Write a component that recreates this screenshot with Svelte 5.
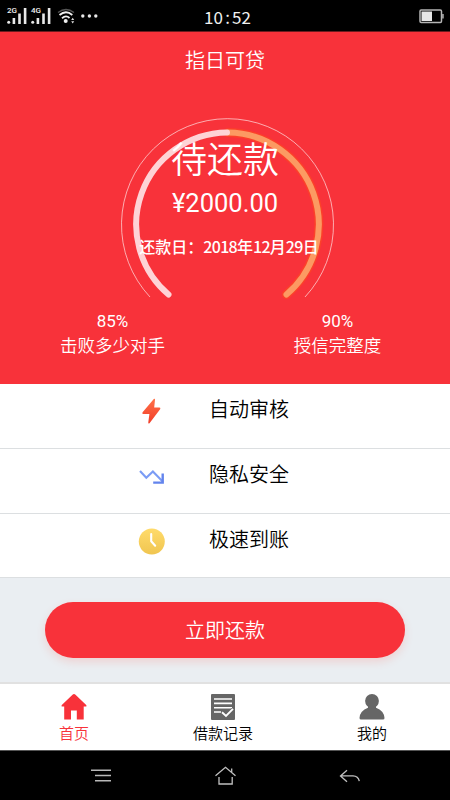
<script>
	let hours = $state('10');
	let minutes = $state('52');
	let activeTab = $state('home');

	const signals = ['2G', '4G'];

	const loan = {
		label: '待还款',
		amount: '¥2000.00'
	};

	const scores = [
		{ value: '85%', label: '击败多少对手' },
		{ value: '90%', label: '授信完整度' }
	];

	const features = [
		{ icon: 'bolt', text: '自动审核' },
		{ icon: 'trend', text: '隐私安全' },
		{ icon: 'clock', text: '极速到账' }
	];

	const tabs = [
		{ id: 'home', text: '首页' },
		{ id: 'records', text: '借款记录' },
		{ id: 'mine', text: '我的' }
	];
</script>

<div class="phone">
	<div class="status-bar">
		<div class="status-left">
			{#each signals as signal}
				<span class="signal">
					<svg width="20" height="16" viewBox="0 0 20 16" fill="#e8e8e8">
						<circle cx="1.7" cy="14.2" r="1.5" />
						<rect x="5.6" y="10" width="2.6" height="6" />
						<rect x="11.2" y="5.5" width="2.6" height="10.5" />
						<rect x="16.8" y="0" width="2.6" height="16" />
					</svg>
					<small>{signal}</small>
				</span>
			{/each}
			<svg class="wifi" width="20" height="16" viewBox="0 0 20 16" fill="none" stroke="#f0f0f0" stroke-width="1.8">
				<path d="M1 4.5Q9 -1.5 17 4.5" stroke="#555" stroke-width="1.3" />
				<path d="M2.5 7Q9 1.5 15.3 7" />
				<path d="M5 10.2Q9 6.7 12.5 10" />
				<circle cx="8.7" cy="13" r="2" fill="#f0f0f0" stroke="none" />
				<path d="M14.2 12l1.5-2.2 1.5 2.2zM14.2 13.2l1.5 2.2 1.5-2.2z" fill="#ddd" stroke="none" />
			</svg>
			<svg width="18" height="4" viewBox="0 0 18 4" fill="#e8e8e8">
				<circle cx="2.8" cy="2" r="1.7" />
				<circle cx="9.4" cy="2" r="1.7" />
				<circle cx="15.8" cy="2" r="1.7" />
			</svg>
		</div>
		<span class="time">{hours}<i>:</i>{minutes}</span>
		<svg class="battery" width="25" height="15" viewBox="0 0 25 15">
			<rect x="1" y="1" width="21.5" height="12.5" rx="1.2" fill="none" stroke="#b5b5b5" stroke-width="1.5" />
			<rect x="2.5" y="2.5" width="10.5" height="9.5" fill="#e6e6e6" />
			<rect x="23.2" y="5" width="1.5" height="4.5" fill="#b5b5b5" />
		</svg>
	</div>

	<section class="hero">
		<h1>指日可贷</h1>
		<div class="gauge">
			<svg class="dial" width="220" height="190" viewBox="0 0 220 190" fill="none">
				<path d="M33 182A106 106 0 1 1 188 182" stroke="#fff" stroke-opacity=".6" stroke-width="1" />
				<path d="M111 17.5A92 92 0 0 1 169.5 179.5" stroke="#ff4a20" stroke-opacity=".6" stroke-width="9" stroke-linecap="round" />
				<path d="M111 17.5A92 92 0 0 1 169.5 179.5" stroke="#fc9a62" stroke-width="6" stroke-linecap="round" />
				<path d="M110 17.5A92 92 0 0 0 51.5 179.5" stroke="#fed3d6" stroke-width="6" stroke-linecap="round" />
			</svg>
			<div class="reading">
				<p class="state">{loan.label}</p>
				<p class="amount">{loan.amount}</p>
				<p class="due">还款日：<span>2018</span>年<span>12</span>月<span>29</span>日</p>
			</div>
		</div>
		<div class="scores">
			{#each scores as score}
				<div class="score">
					<strong>{score.value}</strong>
					<span>{score.label}</span>
				</div>
			{/each}
		</div>
	</section>

	<ul class="features">
		{#each features as feature}
			<li>
				<svg width="28" height="28" viewBox="0 0 28 28">
					{#if feature.icon === 'bolt'}
						<defs>
							<linearGradient id="bolt" x1="0" y1="0" x2="0" y2="1">
								<stop offset="0" stop-color="#ff7048" />
								<stop offset="1" stop-color="#f13d28" />
							</linearGradient>
						</defs>
						<path d="M15.8 2Q17.2 1 17 2.7L16.2 10.6H21.5Q23 10.6 22.1 12.2L11.7 26Q10.1 27.3 10.3 25.3L11.4 17H5.2Q3.6 16.8 4.6 15.2Z" fill="url(#bolt)" />
					{:else if feature.icon === 'trend'}
						<path d="M2 9l6.3 6.8 6.6-6.4 10 10.3" fill="none" stroke="#7b9cf5" stroke-width="2.1" />
						<path d="M24.7 11.5v9.1h-9.5" fill="none" stroke="#6384ed" stroke-width="2.4" />
					{:else}
						<defs>
							<linearGradient id="clock" x1="0" y1="0" x2="0" y2="1">
								<stop offset="0" stop-color="#ffdb6b" />
								<stop offset="1" stop-color="#f0c550" />
							</linearGradient>
						</defs>
						<circle cx="13.8" cy="14.5" r="13" fill="url(#clock)" />
						<path d="M13.2 7v7.2l4 4.5" fill="none" stroke="#fff" stroke-width="2.1" stroke-linecap="round" stroke-linejoin="round" />
					{/if}
				</svg>
				<span>{feature.text}</span>
			</li>
		{/each}
	</ul>

	<div class="action">
		<button type="button">立即还款</button>
	</div>

	<nav class="tabs">
		{#each tabs as tab}
			<button type="button" class:active={activeTab === tab.id} onclick={() => (activeTab = tab.id)}>
				<svg width="28" height="28" viewBox="0 0 28 28" fill="currentColor">
					{#if tab.id === 'home'}
						<path d="M12.5 1.7Q14 .3 15.5 1.7L26.2 12Q27.3 13.5 25.7 13.5H23.7V26.5H16.8V17.5H11V26.5H4.2V13.5H2.3Q.7 13.5 1.8 12Z" />
					{:else if tab.id === 'records'}
						<rect x="2" y="1" width="24" height="26" rx="1" />
						<path d="M5 6h18M5 10.4h18M5 14.8h18M5 19h7" stroke="#fff" stroke-width="1.6" />
						<path d="M13 19.7l4 3.7 7-7" fill="none" stroke="#666" stroke-width="4" />
						<path d="M13 19.2l4 3.7 7-7" fill="none" stroke="#fff" stroke-width="1.9" />
					{:else}
						<ellipse cx="14" cy="8" rx="6.9" ry="7" />
						<path d="M10 12h8v4h-8z" />
						<path d="M1.5 25Q2 17.8 10 14.8Q14 16.8 18 14.8Q26 17.8 26.5 25Q26.5 26.5 25 26.5H3Q1.5 26.5 1.5 25Z" />
					{/if}
				</svg>
				<span>{tab.text}</span>
			</button>
		{/each}
	</nav>

	<div class="nav-keys">
		<svg width="22" height="20" viewBox="0 0 22 20" fill="none" stroke="#b8b8b8" stroke-width="1.4">
			<path d="M1 4.2h20M5 9.5h16M5 14.8h16" />
		</svg>
		<svg width="22" height="20" viewBox="0 0 22 20" fill="none" stroke="#c0c0c0" stroke-width="1.3">
			<path d="M.5 9.8L10.5 1.3l10 8.5M16.7 6.5V2.5M4 11v7h13.2v-7" />
		</svg>
		<svg width="22" height="20" viewBox="0 0 22 20" fill="none" stroke="#c0c0c0" stroke-width="1.3">
			<path d="M8 4.2l-6.5 5.7L8 15.7M1.5 9.9H14q5.2.2 6.3 5.3" />
		</svg>
	</div>
</div>

<style>
	:global(body) {
		margin: 0;
	}

	.phone {
		width: 450px;
		height: 800px;
		display: flex;
		flex-direction: column;
		overflow: hidden;
		background: #eaeef2;
		font-family: Roboto, 'Noto Sans CJK SC', sans-serif;
		font-weight: 350;
	}

	h1,
	p,
	ul {
		margin: 0;
		padding: 0;
		font-weight: inherit;
	}

	svg {
		display: block;
		flex-shrink: 0;
	}

	button {
		border: none;
		padding: 0;
		font: inherit;
		cursor: pointer;
	}

	.status-bar {
		box-sizing: border-box;
		height: 32px;
		display: grid;
		grid-template-columns: 1fr auto 1fr;
		align-items: center;
		padding: 0 6px 0 7px;
		border-bottom: 1px solid #6c1b1e;
		background: #000;
		color: #f0f0f0;
	}

	.status-left {
		display: flex;
		align-items: center;
		gap: 4px;
	}

	.signal {
		position: relative;
	}

	.signal small {
		position: absolute;
		top: -1px;
		left: 0;
		font: 500 8px/8px Roboto, sans-serif;
	}

	.wifi {
		margin: 0 -1px 0 2px;
	}

	.time {
		padding: 3px 0 0 4px;
		font: 400 17px/20px 'Noto Sans CJK SC', sans-serif;
	}

	.time i {
		margin: 0 2.2px;
		font-style: normal;
	}

	.battery {
		justify-self: end;
		margin-top: 1px;
	}

	.hero {
		box-sizing: border-box;
		height: 352px;
		padding-top: 15px;
		background: #f8323a;
		color: #fff;
		text-align: center;
	}

	h1 {
		font-size: 20px;
		line-height: 28px;
	}

	.gauge {
		position: relative;
		height: 190px;
		margin-top: 40px;
	}

	.dial {
		position: absolute;
		top: 0;
		left: 117px;
	}

	.reading {
		position: relative;
		padding-top: 21px;
	}

	.state {
		font-size: 36px;
		line-height: 50px;
	}

	.amount {
		font-size: 25.5px;
		font-weight: 400;
		line-height: 30px;
		margin-top: 2px;
	}

	.due {
		margin: 16px 0 0 8px;
		font: 500 16px/24px 'Noto Sans CJK SC', sans-serif;
	}

	.due span {
		letter-spacing: -0.7px;
	}

	.scores {
		display: flex;
		margin-top: 4px;
	}

	.score {
		flex: 1;
		display: flex;
		flex-direction: column;
		font-size: 17.5px;
		line-height: 27px;
	}

	.score strong {
		font-size: 17px;
		font-weight: 400;
		line-height: 24px;
	}

	.features {
		list-style: none;
		background: #fff;
	}

	.features li {
		box-sizing: border-box;
		height: 65px;
		display: flex;
		align-items: flex-start;
		gap: 43px;
		padding: 13px 0 0 138px;
		border-bottom: 1px solid #dcdfe1;
		color: #000;
		font-size: 20px;
		line-height: 26px;
	}

	.features li:last-child {
		height: 64px;
	}

	.action {
		height: 104px;
		display: flex;
		align-items: center;
		justify-content: center;
	}

	.action button {
		width: 360px;
		height: 56px;
		padding-top: 2px;
		border-radius: 28px;
		background: #f8323a;
		box-shadow: 0 4px 8px rgba(255, 90, 70, 0.18);
		color: #fff;
		font-size: 20px;
		line-height: 26px;
	}

	.tabs {
		box-sizing: border-box;
		height: 68px;
		display: grid;
		grid-template-columns: 148px 150px 148px;
		border-top: 2px solid #e1e1e1;
		background: #fff;
		color: #000;
	}

	.tabs button {
		display: flex;
		flex-direction: column;
		align-items: center;
		padding-top: 9px;
		background: none;
		color: #666;
		font-size: 15px;
		line-height: 27px;
	}

	.tabs span {
		color: #000;
	}

	.tabs .active,
	.tabs .active span {
		color: #f8323a;
	}

	.nav-keys {
		flex: 1;
		display: flex;
		align-items: center;
		justify-content: space-between;
		padding: 0 89px 0 90px;
		border-top: 1px solid #555;
		background: #000;
	}
</style>
